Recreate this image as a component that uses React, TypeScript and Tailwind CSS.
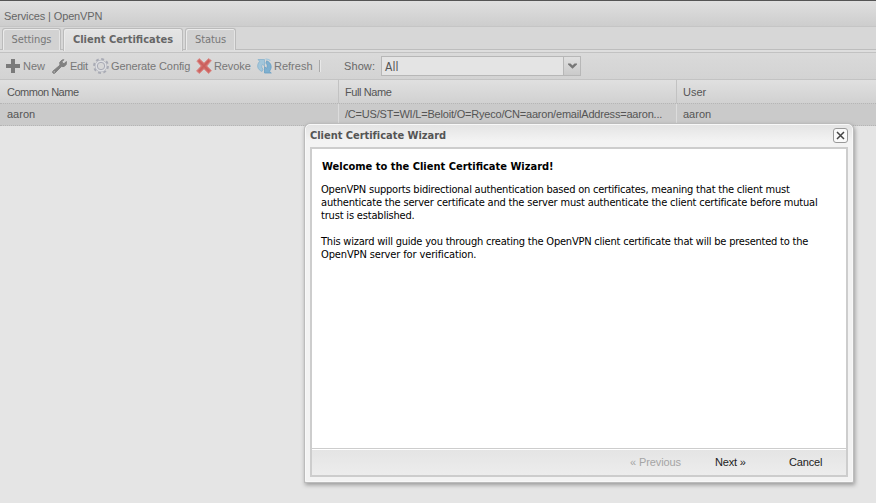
import type { ReactNode } from "react";

const tahoma = "font-['DejaVu_Sans_Condensed','DejaVu_Sans',sans-serif] [font-stretch:condensed]";

function PlusIcon() {
  return (
    <svg width="14" height="14" viewBox="0 0 14 14" shapeRendering="crispEdges">
      <path d="M5 0h4v5h5v4H9v5H5V9H0V5h5z" fill="#7b7b7b" />
    </svg>
  );
}

function WrenchIcon() {
  return (
    <svg width="15" height="15" viewBox="0 0 15 15">
      <path
        d="M10.2.9 7.7 3.4l.3 2.7L.9 12.2c-1.100 1.200.7 3 2 1.900L9.300 7.600l2.900-.1 2-2 .2-2.900-2.300 2-1.600-.4-.4-1.700 1.800-1.800z"
        fill="#818181"
        stroke="#818181"
        strokeWidth="1"
        strokeLinejoin="round"
      />
      <circle cx="2.2" cy="12.8" r=".6" fill="#d5d5d5" />
    </svg>
  );
}

function GearIcon() {
  return (
    <svg width="16" height="16" viewBox="0 0 16 16" fill="none">
      <circle cx="8" cy="8" r="6.9" stroke="#a9abb5" strokeWidth="2" strokeDasharray="2.9 2.519" />
      <circle cx="8" cy="8" r="5.7" stroke="#b4b6be" strokeWidth="1" />
      <circle cx="8" cy="8" r="4.8" stroke="#dedfe3" strokeWidth="1.4" />
      <circle cx="8" cy="8" r="3.7" stroke="#a9abb6" strokeWidth="1" />
    </svg>
  );
}

function CrossIcon() {
  return (
    <svg width="16" height="16" viewBox="0 0 16 16">
      <path
        d="M.8 3 3.3.6 8 5 12.5.6l2.9 2L10.9 8l4.600 4.600-2.900 3L8 11l-4.600 4.500L.5 13 5 8z"
        fill="#d3706d"
        stroke="#d98b88"
        strokeWidth=".8"
        strokeLinejoin="round"
      />
      <path d="m2.800 2.800 10.400 10.400M13 2.600 3 13.200" stroke="#ca5f5c" strokeWidth="1.600" />
    </svg>
  );
}

function RefreshIcon() {
  return (
    <svg width="15" height="16" viewBox="0 0 15 16">
      <path d="M1 1.500h6.500V8L5.500 6.300C4.300 7.800 4.500 9.500 6 11.200L5 13.500C.5 11.500-.8 7.500 2.600 3.300z" fill="#a3c6da" stroke="#86b2ce" strokeWidth=".8" />
      <path d="M14.300 15H7.500V8.500l2 1.800c1.200-1.700 1-3.600-.6-5.200l.8-2.300c4.600 1.900 5.900 6.500 2.700 10.500z" fill="#7fb0d0" stroke="#6a9fc3" strokeWidth=".8" />
      <path d="M8.500 1.200c1.900-.3 3.500.1 4.800 1.500" fill="none" stroke="#a3c6da" strokeWidth="1.300" />
    </svg>
  );
}

function Tool({ icon, children, className }: { icon: ReactNode; children: ReactNode; className: string }) {
  return (
    <button className={`flex h-5 shrink-0 items-center whitespace-nowrap text-[#777] ${className}`}>
      {icon}
      <span>{children}</span>
    </button>
  );
}

function Tab({ children, className }: { children: ReactNode; className: string }) {
  return (
    <button
      className={`shrink-0 whitespace-nowrap rounded-t-[3px] border border-b-0 border-[#bbb] pb-px text-center shadow-[inset_1px_1px_0_#ebebeb,inset_-1px_0_0_#e4e4e4] ${tahoma} ${className}`}
    >
      {children}
    </button>
  );
}

function Dialog() {
  return (
    <section className="absolute left-[305px] top-[124px] flex h-[358px] w-[548px] flex-col rounded-t-[5px] border border-[#f8f8f8] bg-[#f1f1f1] bg-[linear-gradient(#e4e4e4,#f3f3f3_16px)] px-1 pb-1 shadow-[0_0_0_1px_#bcbcbc,1px_2px_4px_1px_#999]">
      <header className="flex h-[22px] shrink-0 items-start justify-between">
        <h1 className={`whitespace-nowrap pt-[3px] text-[11px] font-bold leading-[15px] tracking-[-0.03px] text-[#555] ${tahoma}`}>
          Client Certificate Wizard
        </h1>
        <button aria-label="Close" className="mt-[3px] flex size-[15px] items-center justify-center rounded-[3px] border border-[#999] bg-[#fafafa]">
          <svg width="9" height="9" viewBox="0 0 9 9">
            <path d="m1 1 7 7M8 1 1 8" stroke="#444" strokeWidth="1.5" />
          </svg>
        </button>
      </header>
      <div className="flex min-h-0 flex-1 flex-col border-2 border-[#cdcdcd] bg-white">
        <div className={`flex-1 pl-[9px] text-[11px] leading-[13px] text-black ${tahoma}`}>
          <h2 className="whitespace-nowrap pl-px pt-[11px] text-[11px] font-bold leading-[13px]">Welcome to the Client Certificate Wizard!</h2>
          <p className="mt-[10px] whitespace-nowrap">
            <span className="block tracking-[-0.217px]">OpenVPN supports bidirectional authentication based on certificates, meaning that the client must</span>
            <span className="block tracking-[-0.18px]">authenticate the server certificate and the server must authenticate the client certificate before mutual</span>
            <span className="block tracking-[-0.18px]">trust is established.</span>
          </p>
          <p className="mt-[13px] whitespace-nowrap">
            <span className="block tracking-[-0.213px]">This wizard will guide you through creating the OpenVPN client certificate that will be presented to the</span>
            <span className="block tracking-[-0.13px]">OpenVPN server for verification.</span>
          </p>
        </div>
        <footer className="flex h-[27px] shrink-0 items-center border-t border-[#cdcdcd] bg-gradient-to-b from-[#e4e4e4] to-[#ededed] pl-[318px] text-[11px] text-[#222] shadow-[inset_0_1px_0_#fff]">
          <button className="w-[85px] text-left tracking-[-0.1px] text-[#a5a5a5]">« Previous</button>
          <button className="w-[74px] text-left tracking-[-0.2px]">Next »</button>
          <button className="text-left tracking-[-0.15px]">Cancel</button>
        </footer>
      </div>
    </section>
  );
}

export default function App() {
  return (
    <main className="relative flex h-[503px] w-[876px] flex-col overflow-hidden bg-[#e5e5e5] font-['Liberation_Sans',Arial,sans-serif] text-[11px] leading-[13px] text-[#555]">
      <div className="h-[27px] shrink-0 border-b border-t border-b-[#c5c5c5] border-t-[#555] bg-gradient-to-b from-[#e0e0e0] to-[#cdcdcd] pl-1 pt-[9px] text-[#666]">
        <span className="tracking-[-0.13px]">Services | OpenVPN</span>
      </div>
      <nav className="flex h-[26px] shrink-0 items-start border-b border-[#c2c2c2] bg-[#d7d7d7] bg-[linear-gradient(#d7d7d7_22px,#bdbdbd_22px,#bdbdbd_23px,#dedede_23px)] pl-0.5 pt-px text-[11px] text-[#777]">
        <Tab className="h-[22px] w-[59px] bg-[#d2d2d2] tracking-[-0.1px]">Settings</Tab>
        <Tab className="ml-0.5 h-[23px] w-[120px] bg-gradient-to-b from-[#e5e5e5] to-[#dcdcdc] font-bold text-[#666]">Client Certificates</Tab>
        <Tab className="ml-0.5 h-[22px] w-[51px] bg-[#d2d2d2] tracking-[-0.1px]">Status</Tab>
      </nav>
      <div className="flex h-[27px] shrink-0 items-center border-b border-[#c3c3c3] bg-gradient-to-b from-[#dadada] to-[#d3d3d3] pl-1.5">
        <Tool icon={<PlusIcon />} className="w-[46px] gap-[3px]">New</Tool>
        <Tool icon={<WrenchIcon />} className="w-[41px] gap-[3px] tracking-[-0.3px]">Edit</Tool>
        <Tool icon={<GearIcon />} className="w-[103px] gap-0.5 tracking-[-0.1px]">Generate Config</Tool>
        <Tool icon={<CrossIcon />} className="w-[61px] gap-0.5 tracking-[-0.1px]">Revoke</Tool>
        <Tool icon={<RefreshIcon />} className="w-[62px] gap-0.5">Refresh</Tool>
        <span className="h-3 w-0.5 border-l border-r border-l-[#aaa] border-r-[#e8e8e8]" />
        <label className="ml-[23px] w-[37px] tracking-[0.1px] text-[#666]">Show:</label>
        <div className="flex h-5 w-[200px] border border-[#b7b7b7] bg-[#e4e4e4]">
          <span className={`flex-1 pl-[3px] pt-1 text-[12px] ${tahoma}`}>All</span>
          <button aria-label="Show options" className="flex w-[17px] items-center justify-center border-l border-[#b7b7b7] bg-gradient-to-b from-[#e0e0e0] to-[#cacaca]">
            <svg width="9" height="6" viewBox="0 0 9 6">
              <path d="M0 .5h2.500l2 2 2-2H9v1L4.500 5.800 0 1.500z" fill="#777" />
            </svg>
          </button>
        </div>
      </div>
      <div className="grid h-[23px] shrink-0 grid-cols-[339px_338px_1fr] bg-gradient-to-b from-[#e0e0e0] to-[#d1d1d1] leading-[24px]">
        <span className="border-r border-[#c2c2c2] pl-[7px] tracking-[-0.5px]">Common Name</span>
        <span className="border-r border-[#c2c2c2] pl-1.5 tracking-[-0.4px]">Full Name</span>
        <span className="pl-1.5">User</span>
      </div>
      <div className="grid h-[23px] shrink-0 grid-cols-[339px_338px_1fr] border border-x-0 border-dotted border-[#b5b5b5] bg-[#cacaca] leading-[20px]">
        <span className="border-r border-[#dcdcdc] pl-[7px]">aaron</span>
        <span className="whitespace-nowrap border-r border-[#dcdcdc] pl-1.5 tracking-[-0.2px]">/C=US/ST=WI/L=Beloit/O=Ryeco/CN=aaron/emailAddress=aaron...</span>
        <span className="pl-1.5">aaron</span>
      </div>
      <Dialog />
    </main>
  );
}
